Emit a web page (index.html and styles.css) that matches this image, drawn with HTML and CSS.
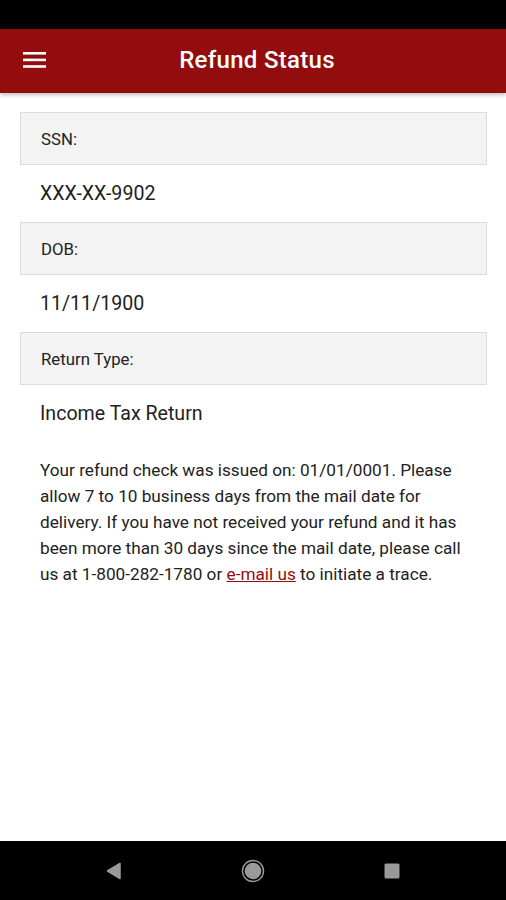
FILE: index.html
```html
<!DOCTYPE html>
<html lang="en">
<head>
    <meta charset="UTF-8">
    <meta name="viewport" content="width=device-width, initial-scale=1.0">
    <title>Refund Status</title>
    <link rel="stylesheet" href="styles.css">
</head>
<body>

    <div class="status-bar"></div>

    <div class="header">
        <button class="menu-btn" type="button" aria-label="Menu">
            <svg width="24" height="16" viewBox="0 0 24 16">
                <rect x="0" y="0" width="23" height="2.6" fill="#fff"/>
                <rect x="0" y="6.6" width="23" height="2.6" fill="#fff"/>
                <rect x="0" y="13.2" width="23" height="2.6" fill="#fff"/>
            </svg>
        </button>
        <h1>Refund Status</h1>
    </div>

    <div class="content">
        <div class="field-label">SSN:</div>
        <div class="field-value">XXX-XX-9902</div>

        <div class="field-label">DOB:</div>
        <div class="field-value">11/11/1900</div>

        <div class="field-label">Return Type:</div>
        <div class="field-value">Income Tax Return</div>

        <p class="message">
            Your refund check was issued on: 01/01/0001. Please allow 7 to 10 business days from the mail date for delivery. If you have not received your refund and it has been more than 30 days since the mail date, please call us at 1-800-282-1780 or <a href="#">e-mail us</a> to initiate a trace.
        </p>
    </div>

    <div class="nav-bar">
        <svg width="18" height="18" viewBox="0 0 18 18">
            <path d="M15 1.5 L15 16.5 L2.5 9 Z" fill="#9a9a9a" stroke="#9a9a9a" stroke-width="1.5" stroke-linejoin="round"/>
        </svg>
        <svg width="24" height="24" viewBox="0 0 24 24">
            <circle cx="12" cy="12" r="10.5" fill="none" stroke="#9a9a9a" stroke-width="1.4"/>
            <circle cx="12" cy="12" r="8.3" fill="#9a9a9a"/>
        </svg>
        <svg width="18" height="18" viewBox="0 0 18 18">
            <rect x="1.5" y="1.5" width="15" height="15" rx="1.5" fill="#9a9a9a"/>
        </svg>
    </div>

</body>
</html>
```

FILE: styles.css
```css
body {
    font-family: Roboto, "Noto Sans", Arial, sans-serif;
    background: #ffffff;
    margin: 0;
    padding: 0;
    width: 506px;
    height: 900px;
    display: flex;
    flex-direction: column;
    overflow: hidden;
}
.status-bar {
    height: 29px;
    background: #000;
    flex-shrink: 0;
}
.header {
    height: 64px;
    background: #930c0e;
    color: white;
    display: flex;
    align-items: center;
    justify-content: center;
    position: relative;
    flex-shrink: 0;
    box-shadow: 0 2px 4px rgba(0, 0, 0, 0.25);
}
.menu-btn {
    position: absolute;
    left: 23px;
    top: 23px;
    background: none;
    border: none;
    padding: 0;
    width: 24px;
    height: 16px;
    display: flex;
}
.header h1 {
    margin: 0 0 2px 8px;
    font-size: 24px;
    font-weight: 500;
    letter-spacing: 0.3px;
}
.content {
    flex: 1;
    padding: 19px 19px 0 20px;
}
.field-label {
    height: 51px;
    background: #f3f3f3;
    border: 1px solid #dcdcdc;
    padding-left: 20px;
    display: flex;
    align-items: center;
    font-size: 16.8px;
    color: #222;
}
.field-value {
    height: 57px;
    padding-left: 20px;
    display: flex;
    align-items: center;
    font-size: 19.6px;
    color: #222;
}
.message {
    margin: 15px 0 0 20px;
    padding-right: 20px;
    font-size: 17.2px;
    line-height: 26px;
    color: #222;
}
.message a {
    color: #930c0e;
    text-decoration: underline;
}
.nav-bar {
    height: 59px;
    background: #000;
    flex-shrink: 0;
    display: flex;
    align-items: center;
    justify-content: center;
    gap: 118px;
}
```
